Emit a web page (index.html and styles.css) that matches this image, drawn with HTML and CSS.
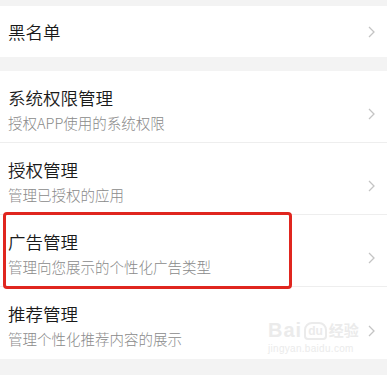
FILE: index.html
```html
<!DOCTYPE html>
<html lang="zh">
<head>
<meta charset="utf-8">
<link rel="stylesheet" href="styles.css">
</head>
<body>
<div class="page">
  <div class="group first">
    <div class="row single">
      <div class="text"><div class="title">黑名单</div></div>
      <svg class="chev" width="7" height="12" viewBox="0 0 7 12"><polyline points="1,1 6,6 1,11" fill="none" stroke="#c4c4c4" stroke-width="1.3"/></svg>
    </div>
  </div>
  <div class="group">
    <div class="row">
      <div class="text"><div class="title">系统权限管理</div><div class="sub">授权APP使用的系统权限</div></div>
      <svg class="chev" width="7" height="12" viewBox="0 0 7 12"><polyline points="1,1 6,6 1,11" fill="none" stroke="#c4c4c4" stroke-width="1.3"/></svg>
    </div>
    <div class="row">
      <div class="text"><div class="title">授权管理</div><div class="sub">管理已授权的应用</div></div>
      <svg class="chev" width="7" height="12" viewBox="0 0 7 12"><polyline points="1,1 6,6 1,11" fill="none" stroke="#c4c4c4" stroke-width="1.3"/></svg>
    </div>
    <div class="row marked">
      <div class="text"><div class="title">广告管理</div><div class="sub">管理向您展示的个性化广告类型</div></div>
      <svg class="chev" width="7" height="12" viewBox="0 0 7 12"><polyline points="1,1 6,6 1,11" fill="none" stroke="#c4c4c4" stroke-width="1.3"/></svg>
      <div class="highlight"></div>
    </div>
    <div class="row">
      <div class="text"><div class="title">推荐管理</div><div class="sub">管理个性化推荐内容的展示</div></div>
      <svg class="chev" width="7" height="12" viewBox="0 0 7 12"><polyline points="1,1 6,6 1,11" fill="none" stroke="#c4c4c4" stroke-width="1.3"/></svg>
      <div class="watermark">
        <div class="wm-logo"><span class="wm-bai">Bai</span><span class="wm-du">du</span><span class="wm-jy">经验</span></div>
        <div class="wm-url">jingyan.baidu.com</div>
      </div>
    </div>
  </div>
</div>
</body>
</html>
```
FILE: styles.css
```css
html, body {
  margin: 0;
  padding: 0;
  background: #f3f3f3;
}
.page {
  width: 387px;
  height: 375px;
  overflow: hidden;
  padding-top: 6px;
  box-sizing: border-box;
  font-family: "Noto Sans CJK SC", "Noto Sans", sans-serif;
}
.group {
  background: #fff;
}
.group.first {
  margin-bottom: 14px;
}
.row {
  position: relative;
  display: flex;
  align-items: flex-start;
  justify-content: space-between;
  height: 72px;
  box-sizing: border-box;
  padding: 15px 12px 0 8px;
  border-bottom: 1px solid #eeeeee;
}
.row:last-child {
  border-bottom: none;
}
.row.single {
  height: 51px;
  align-items: center;
  padding-top: 0;
  border-bottom: none;
}
.title {
  font-size: 17.5px;
  line-height: 24px;
  font-weight: 350;
  color: #1a1a1a;
}
.sub {
  margin-top: 3px;
  font-size: 14.5px;
  line-height: 20px;
  font-weight: 300;
  color: #8a8a8a;
}
.chev {
  align-self: center;
  flex: none;
}
.highlight {
  position: absolute;
  left: 3px;
  top: -3px;
  width: 289px;
  height: 77px;
  box-sizing: border-box;
  border: 3px solid #e0261f;
  border-radius: 4px;
}
.watermark {
  position: absolute;
  left: 268px;
  top: 33px;
  width: 95px;
  color: #ebebeb;
  font-family: "Liberation Sans", sans-serif;
}
.wm-logo {
  display: flex;
  align-items: flex-end;
  gap: 2px;
  line-height: 20px;
}
.wm-bai {
  font-size: 20px;
  font-weight: bold;
  letter-spacing: 1px;
}
.wm-du {
  font-size: 12px;
  font-weight: bold;
  border: 2px solid #ebebeb;
  border-radius: 8px 8px 4px 4px;
  padding: 0 2px;
  line-height: 14px;
}
.wm-jy {
  font-family: "Noto Sans CJK SC", sans-serif;
  font-size: 15px;
  font-weight: bold;
}
.wm-url {
  font-size: 10px;
  line-height: 14px;
  margin-top: 2px;
  letter-spacing: 0.3px;
}
```
